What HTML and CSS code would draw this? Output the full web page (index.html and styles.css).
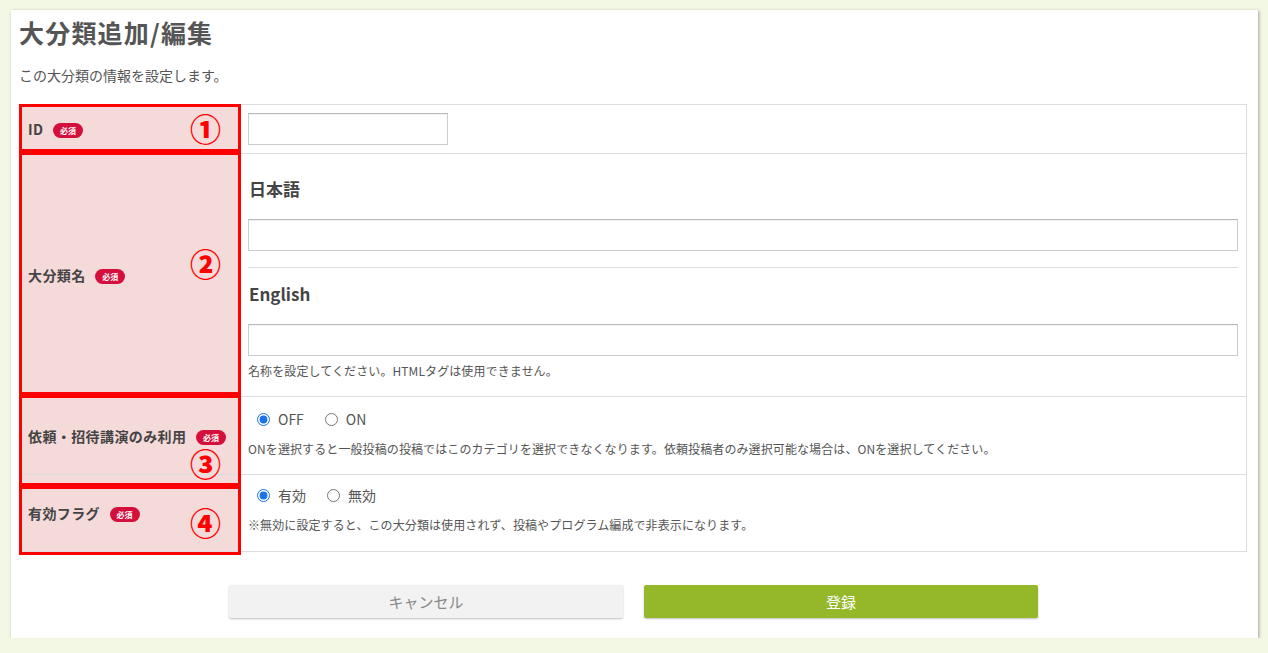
FILE: index.html
```html
<!DOCTYPE html>
<html lang="ja">
<head>
    <meta charset="UTF-8">
    <meta name="viewport" content="width=device-width, initial-scale=1.0">
    <title>大分類追加/編集</title>
    <link rel="stylesheet" href="styles.css">
</head>
<body>
<div class="card">
    <h1>大分類追加/編集</h1>
    <p class="lead">この大分類の情報を設定します。</p>

    <div class="form-wrap">
        <table class="form-table">
            <tr class="row-id">
                <th>ID <span class="req">必須</span></th>
                <td><input type="text" class="input input-short"></td>
            </tr>
            <tr class="row-name">
                <th>大分類名 <span class="req">必須</span></th>
                <td>
                    <h3 class="lang">日本語</h3>
                    <input type="text" class="input">
                    <hr class="sep">
                    <h3 class="lang">English</h3>
                    <input type="text" class="input">
                    <p class="help help-name">名称を設定してください。HTMLタグは使用できません。</p>
                </td>
            </tr>
            <tr class="row-radio">
                <th>依頼・招待講演のみ利用 <span class="req">必須</span></th>
                <td>
                    <div class="radios">
                        <label><input type="radio" name="invite" checked> OFF</label>
                        <label><input type="radio" name="invite"> ON</label>
                    </div>
                    <p class="help">ONを選択すると一般投稿の投稿ではこのカテゴリを選択できなくなります。依頼投稿者のみ選択可能な場合は、ONを選択してください。</p>
                </td>
            </tr>
            <tr class="row-radio row-last">
                <th>有効フラグ <span class="req">必須</span></th>
                <td>
                    <div class="radios">
                        <label><input type="radio" name="enabled" checked> 有効</label>
                        <label><input type="radio" name="enabled"> 無効</label>
                    </div>
                    <p class="help">※無効に設定すると、この大分類は使用されず、投稿やプログラム編成で非表示になります。</p>
                </td>
            </tr>
        </table>

        <!-- annotation boxes -->
        <div class="mark mark-1"><span class="num">①</span></div>
        <div class="mark mark-2"><span class="num">②</span></div>
        <div class="mark mark-3"><span class="num">③</span></div>
        <div class="mark mark-4"><span class="num">④</span></div>
    </div>

    <div class="actions">
        <button class="btn btn-cancel">キャンセル</button>
        <button class="btn btn-submit">登録</button>
    </div>
</div>
</body>
</html>
```

FILE: styles.css
```css
body {
    margin: 0;
    background-color: #f3f8e4;
    font-family: "Noto Sans CJK JP", "Noto Sans", sans-serif;
    color: #555;
}
.card {
    margin: 10px 0 0 11px;
    width: 1231px;
    padding: 4px 8px 20px 8px;
    background-color: #fff;
    box-shadow: 1px 1px 3px rgba(0, 0, 0, 0.35);
}
h1 {
    margin: 0;
    font-size: 25px;
    line-height: 36px;
    font-weight: bold;
    color: #555;
    letter-spacing: 1.2px;
}
.lead {
    margin: 15px 0 0;
    font-size: 14px;
    line-height: 20px;
}
.form-wrap {
    position: relative;
    margin-top: 19px;
    width: 1228px;
}
.form-table {
    width: 100%;
    border-collapse: collapse;
    border: 1px solid #ddd;
}
.form-table th,
.form-table td {
    border-top: 1px solid #ddd;
    border-bottom: 1px solid #ddd;
}
.form-table th {
    width: 204px;
    padding: 0 8px;
    background-color: #f5dada;
    text-align: left;
    font-size: 14px;
    letter-spacing: 0.4px;
    color: #444;
    vertical-align: middle;
}
.form-table td {
    padding: 8px 8px;
    vertical-align: top;
}
.req {
    display: inline-block;
    margin-left: 6px;
    padding: 0 7px;
    height: 15px;
    line-height: 15px;
    border-radius: 8px;
    background-color: #d40f3c;
    color: #fff;
    font-size: 8px;
    letter-spacing: 0;
    vertical-align: 1px;
}
.input {
    display: block;
    box-sizing: border-box;
    width: 100%;
    height: 32px;
    border: 1px solid #ccc;
    border-top-color: #b9b9b9;
    box-shadow: inset 0 1px 1px rgba(0, 0, 0, 0.06);
    padding: 4px 8px;
    font-size: 14px;
}
.input-short {
    width: 200px;
}
.lang {
    margin: 14px 0 17px 1px;
    font-size: 17px;
    line-height: 26px;
    font-weight: bold;
    color: #444;
}
.sep {
    margin: 16px 0 0;
    border: none;
    border-top: 1px solid #ddd;
    height: 0;
}
.sep + .lang {
    margin-top: 13px;
}
.help {
    margin: 12px 0 0;
    font-size: 12px;
    line-height: 16px;
    color: #555;
    letter-spacing: 0.1px;
}
.help-name {
    margin: 7px 0 9px;
}
.row-radio td {
    padding-top: 12px;
    padding-bottom: 17px;
}
.row-last td {
    padding-top: 10px;
    padding-bottom: 18px;
}
.radios {
    display: flex;
    height: 20px;
    align-items: center;
    font-size: 14px;
    color: #555;
}
.radios label {
    display: flex;
    align-items: center;
    margin-right: 12px;
}
.radios input {
    margin: 0 8px 0 9px;
    width: 13px;
    height: 13px;
    accent-color: #1a73e8;
}
.mark {
    position: absolute;
    left: 0;
    width: 216px;
    border: 3px solid #ff0000;
}
.mark-1 { top: 0; height: 42px; }
.mark-2 { top: 48px; height: 237px; }
.mark-3 { top: 291px; height: 85px; }
.mark-4 { top: 382px; height: 63px; }
.num {
    position: absolute;
    right: 17px;
    font-size: 31px;
    line-height: 30px;
    font-weight: 900;
    color: #ff0000;
}
.mark-1 .num { top: 6px; }
.mark-2 .num { top: 93px; }
.mark-3 .num { top: 50px; }
.mark-4 .num { top: 18px; }
.actions {
    display: flex;
    gap: 21px;
    margin: 33px 0 0 210px;
}
.btn {
    width: 394px;
    height: 33px;
    border: none;
    border-radius: 2px;
    font-family: "Noto Sans CJK JP", "Noto Sans", sans-serif;
    font-size: 15px;
    cursor: pointer;
    box-shadow: 0 1px 2px rgba(0, 0, 0, 0.25);
}
.btn-cancel {
    background-color: #f2f2f2;
    color: #888;
}
.btn-submit {
    background-color: #95b72a;
    color: #fff;
}
```
